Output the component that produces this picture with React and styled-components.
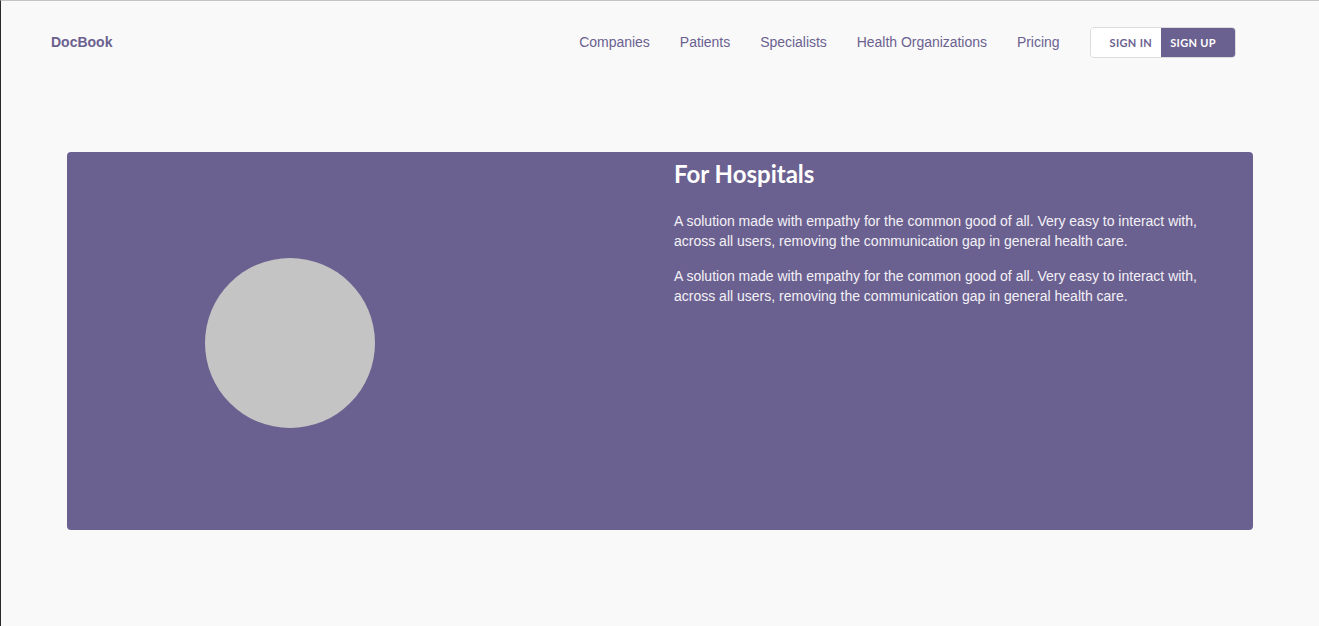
import React from "react"
import styled, { createGlobalStyle } from "styled-components"

const purple = "#6b6190"

const GlobalStyle = createGlobalStyle`
  html, body {
    margin: 0;
    padding: 0;
    background: #f9f9f9;
  }
  * {
    box-sizing: border-box;
  }
`

const Page = styled.div`
  min-height: 626px;
  background: #f9f9f9;
  border-top: 1px solid #c4c4c4;
  border-left: 1px solid #2a2a2a;
  font-family: "Liberation Sans", Arial, sans-serif;
`

const Header = styled.header`
  height: 82px;
  display: flex;
  align-items: center;
  justify-content: space-between;
  padding: 0 83px 0 50px;
`

const Logo = styled.a`
  font-size: 14px;
  font-weight: 700;
  color: ${purple};
  text-decoration: none;
`

const Nav = styled.nav`
  display: flex;
  align-items: center;
`

const NavLinks = styled.ul`
  display: flex;
  gap: 30px;
  list-style: none;
  margin: 0 30px 0 0;
  padding: 0;
`

const NavLink = styled.a`
  font-size: 14px;
  letter-spacing: -0.03px;
  color: ${purple};
  text-decoration: none;
`

const AuthGroup = styled.div`
  display: flex;
  height: 31px;
  border: 1px solid #dcdcdc;
  border-radius: 4px;
  overflow: hidden;
`

const AuthButton = styled.button`
  border: none;
  margin: 0;
  font-family: Lato, "Liberation Sans", sans-serif;
  font-weight: 700;
  font-size: 11px;
  letter-spacing: 0.35px;
  text-transform: uppercase;
  cursor: pointer;
  background: ${(p) => (p.$primary ? purple : "#fff")};
  color: ${(p) => (p.$primary ? "#fff" : purple)};
  padding: ${(p) => (p.$primary ? "1px 19px 0 9px" : "1px 9px 0 19px")};
`

const Main = styled.main`
  padding: 69px 66px 0;
`

const Card = styled.section`
  height: 378px;
  background: ${purple};
  border-radius: 4px;
  display: grid;
  grid-template-columns: 607px 1fr;
`

const Visual = styled.div`
  display: flex;
  align-items: center;
  padding: 4px 0 0 138px;
`

const Circle = styled.div`
  width: 170px;
  height: 170px;
  border-radius: 50%;
  background: #c4c4c4;
`

const Content = styled.div`
  padding-top: 8px;
  max-width: 545px;
  color: #f3f1f7;
`

const Title = styled.h2`
  font-family: Lato, "Liberation Sans", sans-serif;
  font-weight: 700;
  font-size: 24px;
  line-height: 1.2;
  color: #fff;
  margin: 0 0 22px;
`

const Text = styled.p`
  font-size: 14px;
  line-height: 20px;
  margin: 0 0 15px;
`

const links = ["Companies", "Patients", "Specialists", "Health Organizations", "Pricing"]

const copy =
  "A solution made with empathy for the common good of all. Very easy to interact with, across all users, removing the communication gap in general health care."

export default function App() {
  return (
    <Page>
      <GlobalStyle />
      <Header>
        <Logo href="#">DocBook</Logo>
        <Nav>
          <NavLinks>
            {links.map((l) => (
              <li key={l}>
                <NavLink href="#">{l}</NavLink>
              </li>
            ))}
          </NavLinks>
          <AuthGroup>
            <AuthButton>Sign in</AuthButton>
            <AuthButton $primary>Sign up</AuthButton>
          </AuthGroup>
        </Nav>
      </Header>
      <Main>
        <Card>
          <Visual>
            <Circle />
          </Visual>
          <Content>
            <Title>For Hospitals</Title>
            <Text>{copy}</Text>
            <Text>{copy}</Text>
          </Content>
        </Card>
      </Main>
    </Page>
  )
}
